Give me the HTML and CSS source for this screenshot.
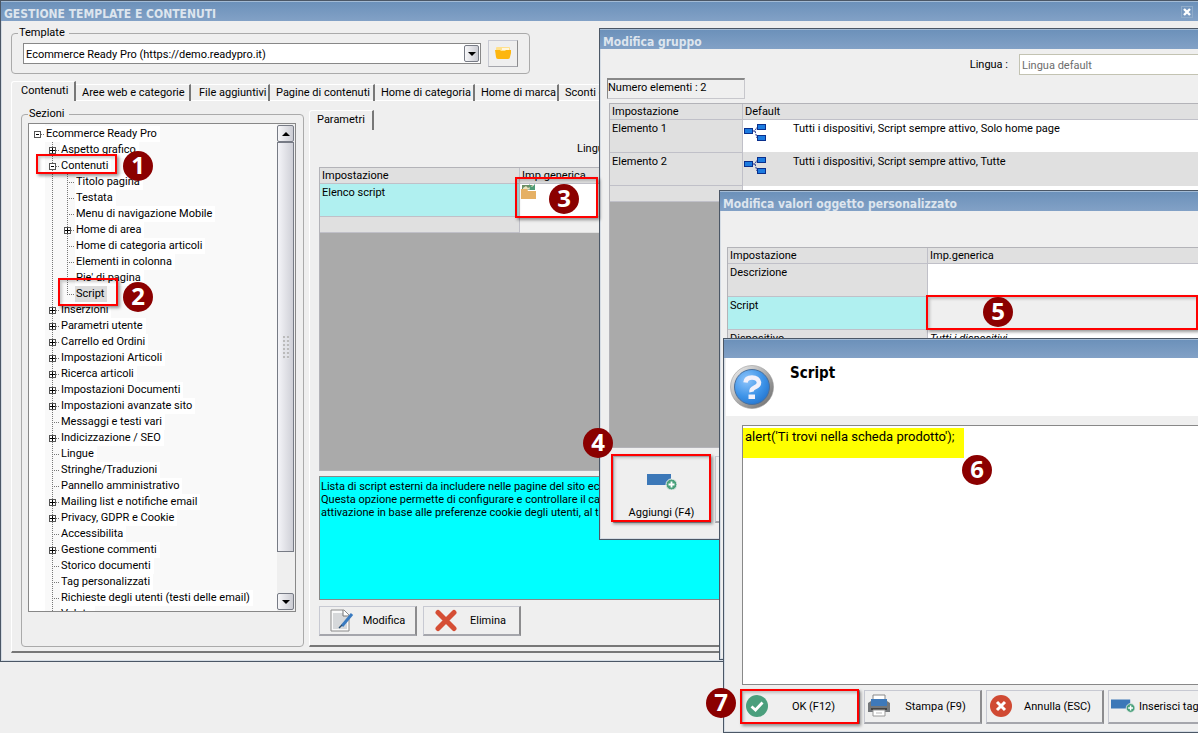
FILE: index.html
```html
<!DOCTYPE html>
<html lang="it">
<head>
<meta charset="utf-8">
<title>Gestione template e contenuti</title>
<link rel="stylesheet" href="styles.css">
</head>
<body>
<svg class="defs" aria-hidden="true">
  <symbol id="nodes" viewBox="0 0 24 19">
    <path d="M9 8h2l2-4h2M11 8l2 7h2" fill="none" stroke="#1b2f8a" stroke-dasharray="2 1"/>
    <g fill="#1c7be0" stroke="#0a2f8c"><rect x=".5" y="5.500" width="8" height="5"/><rect x="13.500" y="1.500" width="8" height="5"/><rect x="13.500" y="12.500" width="8" height="5"/></g>
  </symbol>
  <symbol id="add" viewBox="0 0 30 18">
    <path d="M0 1h24v11H0z" fill="#3c78b8"/><circle cx="24.500" cy="11.500" r="5.500" fill="#4aa17c" stroke="#efefef"/><path d="M24.500 8.500v6M21.500 11.500h6" stroke="#fff" stroke-width="1.800"/>
  </symbol>
</svg>
<main class="desktop">
  <section class="window window-main">
    <header class="titlebar"><h1>GESTIONE TEMPLATE E CONTENUTI</h1><button class="close" aria-label="Chiudi"><svg viewBox="0 0 8 8"><path d="M1 1l6 6M7 1L1 7" stroke="#fff" stroke-width="2.400"/></svg></button></header>
    <fieldset class="group template">
      <legend>Template</legend>
      <div class="select-wrap"><select aria-label="Template"><option>Ecommerce Ready Pro (https://demo.readypro.it)</option></select><span class="arrow-box"><i class="arrow down"></i></span></div>
      <button class="raised folder" aria-label="Apri"><svg viewBox="0 0 16 12"><path d="M1 1q0-1 1-1h12q1 0 1 1v5H1z" fill="#ffe08c"/><path d="M0 3h5l1 1h4l1-1h5v3l-1 4q0 2-2 2H3q-2 0-2-2z" fill="#fdb60e"/><path d="M7 1h7v2H7z" fill="#fff6dc"/></svg></button>
    </fieldset>
    <nav class="tabs" role="tablist">
      <button class="tab active" role="tab">Contenuti</button><button class="tab w2" role="tab">Aree web e categorie</button><button class="tab w3" role="tab">File aggiuntivi</button><button class="tab w4" role="tab">Pagine di contenuti</button><button class="tab w5" role="tab">Home di categoria</button><button class="tab w6" role="tab">Home di marca</button><button class="tab w7" role="tab">Sconti e</button>
    </nav>
    <div class="panel">
      <fieldset class="group sections">
        <legend>Sezioni</legend>
        <div class="listbox">
          <ul class="tree">
            <li><div class="row"><button class="toggle" aria-label="Comprimi"></button><span class="label">Ecommerce Ready Pro</span></div>
              <ul>
                <li><div class="row"><button class="toggle plus" aria-label="Espandi"></button><span class="label">Aspetto grafico</span></div></li>
                <li><div class="row"><button class="toggle" aria-label="Comprimi"></button><span class="label">Contenuti</span></div>
                  <ul>
                    <li><div class="row leaf"><span class="label">Titolo pagina</span></div></li>
                    <li><div class="row leaf"><span class="label">Testata</span></div></li>
                    <li><div class="row leaf"><span class="label">Menu di navigazione Mobile</span></div></li>
                    <li><div class="row"><button class="toggle plus" aria-label="Espandi"></button><span class="label">Home di area</span></div></li>
                    <li><div class="row leaf"><span class="label">Home di categoria articoli</span></div></li>
                    <li><div class="row leaf"><span class="label">Elementi in colonna</span></div></li>
                    <li><div class="row leaf"><span class="label">Pie' di pagina</span></div></li>
                    <li><div class="row leaf"><span class="label selected">Script</span></div></li>
                  </ul>
                </li>
                <li><div class="row"><button class="toggle plus" aria-label="Espandi"></button><span class="label">Inserzioni</span></div></li>
                <li><div class="row"><button class="toggle plus" aria-label="Espandi"></button><span class="label">Parametri utente</span></div></li>
                <li><div class="row"><button class="toggle plus" aria-label="Espandi"></button><span class="label">Carrello ed Ordini</span></div></li>
                <li><div class="row"><button class="toggle plus" aria-label="Espandi"></button><span class="label">Impostazioni Articoli</span></div></li>
                <li><div class="row"><button class="toggle plus" aria-label="Espandi"></button><span class="label">Ricerca articoli</span></div></li>
                <li><div class="row"><button class="toggle plus" aria-label="Espandi"></button><span class="label">Impostazioni Documenti</span></div></li>
                <li><div class="row"><button class="toggle plus" aria-label="Espandi"></button><span class="label">Impostazioni avanzate sito</span></div></li>
                <li><div class="row leaf"><span class="label">Messaggi e testi vari</span></div></li>
                <li><div class="row"><button class="toggle plus" aria-label="Espandi"></button><span class="label">Indicizzazione / SEO</span></div></li>
                <li><div class="row leaf"><span class="label">Lingue</span></div></li>
                <li><div class="row leaf"><span class="label">Stringhe/Traduzioni</span></div></li>
                <li><div class="row leaf"><span class="label">Pannello amministrativo</span></div></li>
                <li><div class="row"><button class="toggle plus" aria-label="Espandi"></button><span class="label">Mailing list e notifiche email</span></div></li>
                <li><div class="row"><button class="toggle plus" aria-label="Espandi"></button><span class="label">Privacy, GDPR e Cookie</span></div></li>
                <li><div class="row leaf"><span class="label">Accessibilita</span></div></li>
                <li><div class="row"><button class="toggle plus" aria-label="Espandi"></button><span class="label">Gestione commenti</span></div></li>
                <li><div class="row leaf"><span class="label">Storico documenti</span></div></li>
                <li><div class="row leaf"><span class="label">Tag personalizzati</span></div></li>
                <li><div class="row leaf"><span class="label">Richieste degli utenti (testi delle email)</span></div></li>
                <li><div class="row leaf"><span class="label">Valute</span></div></li>
              </ul>
            </li>
          </ul>
          <div class="scrollbar"><span class="arrow-box"><i class="arrow up"></i></span><div class="thumb"><i class="grip"></i></div><span class="arrow-box"><i class="arrow down"></i></span></div>
        </div>
      </fieldset>
      <div class="params">
        <div class="tabs inner" role="tablist"><button class="tab active" role="tab">Parametri</button></div>
        <div class="params-body">
          <div class="lang">Lingua :</div>
          <div class="gridbox main-grid">
            <table class="grid g200">
              <tr><th>Impostazione</th><th>Imp.generica</th></tr>
              <tr class="tall"><td class="current">Elenco script</td><td class="white icon-cell"><svg class="box-icon" viewBox="0 0 15 15"><path d="M1 5V1h11v5z" fill="#6b8f65"/><path d="M2 4l3-2 2 2 5-3v4H2z" fill="#e8e2c0"/><path d="M8 0l3 3 3-3v6H9z" fill="#4e9b76"/><path d="M0 5h6l1 2h8v8H0z" fill="#e5b064"/></svg></td></tr>
              <tr class="blank"><td></td><td></td></tr>
            </table>
          </div>
          <p class="info">Lista di script esterni da includere nelle pagine del sito ecommerce.<br>Questa opzione permette di configurare e controllare il caricamento<br>attivazione in base alle preferenze cookie degli utenti, al tipo</p>
          <div class="buttons">
            <button class="raised edit"><svg viewBox="0 0 24 24"><path d="M1 1h13l5 5v16H1z" fill="#fafafa" stroke="#8a8a8a"/><path d="M3 4h10v3h4v13H3z" fill="#d6d8da"/><path d="M13 1v6h6" fill="#fff" stroke="#777"/><path d="M22 5L12 17" stroke="#397ac0" stroke-width="3"/><path d="M12 16l-3 3" stroke="#284d70" stroke-width="1.500"/></svg><span>Modifica</span></button>
            <button class="raised edit"><svg viewBox="0 0 24 24"><path d="M4 3.500l16 16M20 3.500L4 19.500" stroke="#d54e35" stroke-width="5" stroke-linecap="round"/></svg><span>Elimina</span></button>
          </div>
        </div>
      </div>
    </div>
  </section>

  <section class="window window-group">
    <header class="titlebar"><h2>Modifica gruppo</h2></header>
    <div class="group-top"><label for="lang">Lingua :</label><input id="lang" value="Lingua default"></div>
    <div class="count">Numero elementi : 2</div>
    <div class="gridbox group-grid">
      <table class="grid g133">
        <tr><th>Impostazione</th><th>Default</th></tr>
        <tr class="tall"><td>Elemento 1</td><td class="white icon-cell"><div class="cell"><svg><use href="#nodes"/></svg>Tutti i dispositivi, Script sempre attivo, Solo home page</div></td></tr>
        <tr class="tall"><td>Elemento 2</td><td class="icon-cell"><div class="cell"><svg><use href="#nodes"/></svg>Tutti i dispositivi, Script sempre attivo, Tutte</div></td></tr>
        <tr class="blank"><td></td><td class="white"></td></tr>
      </table>
    </div>
    <div class="group-buttons">
      <button class="raised big"><svg><use href="#add"/></svg><span>Aggiungi (F4)</span></button>
      <button class="raised big" aria-label="Modifica"></button>
    </div>
  </section>

  <section class="window window-values">
    <header class="titlebar"><h2>Modifica valori oggetto personalizzato</h2></header>
    <div class="gridbox values-grid">
      <table class="grid g200">
        <tr><th>Impostazione</th><th>Imp.generica</th></tr>
        <tr class="tall"><td>Descrizione</td><td class="white"></td></tr>
        <tr class="tall"><td class="current">Script</td><td class="plain"></td></tr>
        <tr class="tall"><td>Dispositivo</td><td class="white"><em>Tutti i dispositivi</em></td></tr>
      </table>
    </div>
  </section>

  <section class="window window-script">
    <header class="titlebar"></header>
    <div class="banner">
      <svg viewBox="0 0 44 44"><defs><linearGradient id="rim" x1="0" y1="0" x2="1" y2="1"><stop offset="0" stop-color="#f4f4f4"/><stop offset="1" stop-color="#666"/></linearGradient><radialGradient id="ball" cx=".35" cy=".3" r=".8"><stop offset="0" stop-color="#8fc5fb"/><stop offset=".6" stop-color="#3d93e8"/><stop offset="1" stop-color="#2272cc"/></radialGradient></defs><circle cx="22" cy="22" r="21.500" fill="url(#rim)" stroke="#999" stroke-width=".6"/><circle cx="22" cy="22" r="17.500" fill="url(#ball)" stroke="#4b6f9a"/><path d="M15.500 17.500q.5-5 6.500-5t7 5q0 3-4 4.800t-3.500 4.700" fill="none" stroke="#f3f1fb" stroke-width="4.500"/><path d="M18.500 29.500h6.500v4.500h-6.500z" fill="#f3f1fb"/></svg>
      <h2>Script</h2>
    </div>
    <textarea aria-label="Script" spellcheck="false">alert('Ti trovi nella scheda prodotto');</textarea>
    <div class="script-buttons">
      <button class="raised"><svg viewBox="0 0 24 24"><circle cx="12" cy="12" r="11" fill="#4b9f7d"/><path d="M6.500 12.500l4 3.500 7-7.500" fill="none" stroke="#fff" stroke-width="2.800"/></svg><span>OK (F12)</span></button>
      <button class="raised"><svg viewBox="0 0 24 24"><path d="M6 1h12v6H6z" fill="#fff" stroke="#888"/><path d="M1 9l3-2h16l3 2v9H1z" fill="#74777a"/><path d="M4 5h16v7H4z" fill="#3e79ba"/><path d="M4 14h16v2H4z" fill="#444"/><path d="M6 16h12v6H6z" fill="#fff" stroke="#999"/><path d="M9 19h6" stroke="#bbb"/></svg><span>Stampa (F9)</span></button>
      <button class="raised"><svg viewBox="0 0 24 24"><circle cx="12" cy="12" r="11" fill="#d04a33"/><path d="M8 8l8 8M16 8l-8 8" stroke="#fff" stroke-width="3"/></svg><span>Annulla (ESC)</span></button>
      <button class="raised insert"><svg viewBox="0 0 30 18"><use href="#add"/></svg><span>Inserisci tag</span></button>
    </div>
  </section>

  <div class="mark m1"></div><div class="mark m2"></div><div class="mark m3"></div><div class="mark m4"></div><div class="mark m5"></div><div class="mark m7"></div>
  <b class="badge b1">1</b><b class="badge b2">2</b><b class="badge b3">3</b><b class="badge b4">4</b><b class="badge b5">5</b><b class="badge b6">6</b><b class="badge b7">7</b>
</main>
</body>
</html>
```
FILE: styles.css
```css
* { box-sizing: border-box; }
body { margin: 0; background: #efefef; color: #000; font: 11px/16px Roboto, "Noto Sans", sans-serif; }
button, select, input, textarea { font: inherit; color: inherit; margin: 0; padding: 0; border: 0; border-radius: 0; background: none; }
h1, h2, p, ul { margin: 0; padding: 0; }
ul { list-style: none; }
svg { display: block; flex: none; }
.defs { position: absolute; width: 0; height: 0; }
.desktop { position: relative; min-height: 100vh; overflow: hidden; }

.window { position: absolute; right: 0; display: flex; flex-direction: column; background: #efefef; border: 1px solid #4b5766; border-right: 0; box-shadow: inset 1px -1px #d5dce4; }
.window-main { left: 0; top: 0; padding-bottom: 8px; }
.window-group { left: 599px; top: 28px; padding-bottom: 16px; }
.window-values { left: 719px; top: 190px; }
.window-script { left: 723px; top: 338px; padding-bottom: 8px; }

.titlebar { display: flex; align-items: center; justify-content: space-between; height: 20px; padding: 5px 5px 0 3px; background: linear-gradient(#6c91ba, #82a1c6); border-top: 1px solid #a3bbd5; color: #dde5ee; }
.titlebar h1, .titlebar h2, .banner h2 { font-family: "DejaVu Sans Condensed", "Noto Sans", sans-serif; font-weight: bold; white-space: nowrap; }
.titlebar h1, .titlebar h2 { font-size: 12px; line-height: 14px; }
.close { display: grid; place-items: center; width: 12px; height: 12px; margin-bottom: 5px; border: 1px solid #8fabc9; }
.close svg { width: 8px; height: 8px; }

.group { min-width: 0; margin: 0; border: 1px solid #aaa; border-radius: 4px; }
.group legend { padding: 0 4px 0 1px; line-height: 14px; }
.template { display: flex; align-items: center; gap: 7px; width: 519px; height: 48px; margin: 5px 0 0 10px; padding: 0 11px 4px; }
.template legend { margin-left: -5px; }
.select-wrap { position: relative; flex: 1; height: 21px; border: 1px solid #888; background: #fff; }
.select-wrap select { width: 100%; height: 19px; padding: 2px 0 0 2px; appearance: none; outline: 0; }
.select-wrap .arrow-box { position: absolute; right: 1px; top: 1px; width: 15px; height: 17px; pointer-events: none; }
.arrow-box { display: flex; align-items: center; justify-content: center; height: 17px; border: 1px solid #777b85; border-radius: 2px; background: linear-gradient(90deg, #f7f7f9, #cbccd3); }
.arrow { border: 4px solid transparent; }
.arrow.down { border-top-color: #000; border-bottom: 0; }
.arrow.up { border-bottom-color: #000; border-top: 0; }

.raised { display: flex; align-items: center; border: 1px solid #c7c9d2; border-right: 2px solid #8c8c8e; border-bottom: 2px solid #a5a6ac; background: #efefef; white-space: nowrap; }
.folder { width: 30px; height: 27px; padding: 0 0 2px 6px; border-width: 1px; }
.folder svg { width: 16px; height: 12px; }

.tabs { display: flex; align-items: flex-end; overflow: hidden; height: 20px; margin: 7px 0 0 10px; }
.tab { flex: none; height: 17px; padding: 0 0 0 6px; border-top: 1px solid #fff; border-right: 2px solid #777; text-align: left; white-space: nowrap; box-shadow: inset 0 -1px #fff; }
.tab.active { width: 65px; height: 20px; padding: 0 0 1px 9px; border-left: 1px solid #fff; border-radius: 3px 0 0 0; box-shadow: none; }
.w2 { width: 115px; } .w3 { width: 79px; padding-left: 8px; } .w4 { width: 105px; } .w5 { width: 100px; } .w6 { width: 84px; } .w7 { flex: 1; }

.panel { display: flex; gap: 5px; margin-left: 10px; padding: 6px 0 4px 9px; border-left: 1px solid #fff; border-bottom: 2px solid #777; }
.sections { width: 283px; padding: 2px 7px 31px 6px; }
.listbox { display: flex; height: 489px; border: 1px solid #888; background: #fff; }
.tree { flex: 1; overflow: hidden; padding-top: 2px; background: linear-gradient(#f9f9f9, #f9f9f9) 16px 0 no-repeat; }
.tree ul { padding-left: 15px; }
.tree li li { background: repeating-linear-gradient(#777 0 1px, transparent 1px 2px) 8px 0 / 1px 100% no-repeat; }
.tree ul ul li:last-child { background-size: 1px 8px; }
.row { display: flex; align-items: center; height: 16px; padding-left: 5px; }
.row.leaf { padding-left: 8px; }
.toggle { width: 7px; height: 7px; border: 1px solid #555; background: linear-gradient(#000, #000) 1px 2px / 3px 1px no-repeat, #fff; }
.toggle.plus { background: linear-gradient(#000, #000) 0 2px / 5px 1px no-repeat, linear-gradient(#000, #000) 2px 0 / 1px 5px no-repeat, #fff; }
.label { display: flex; order: 2; white-space: nowrap; background: #fff; padding: 0 3px 0 1px; }
.label.selected { background: #dcdcdc; }
.row::before { content: ""; order: 1; width: 4px; height: 1px; background: repeating-linear-gradient(90deg, #777 0 1px, transparent 1px 2px); }
.row.leaf::before { width: 8px; }
.scrollbar { display: flex; flex-direction: column; width: 18px; padding: 1px 1px 1px 0; background: #efefef; }
.thumb { display: grid; place-items: center; flex: none; height: 410px; border: 1px solid #777b85; background: linear-gradient(90deg, #f4f4f8, #cfd0d7); }
.scrollbar .arrow-box:last-child { margin-top: auto; }
.grip { width: 6px; height: 23px; background: repeating-linear-gradient(transparent 0 2px, #e2e3e8 2px 4px), repeating-linear-gradient(90deg, #bbb 0 2px, transparent 2px 4px); }

.params { flex: 1; min-width: 0; padding-top: 3px; }
.params .inner { margin: 0; }
.inner .tab.active { padding-left: 7px; }
.params-body { border: solid #fff; border-width: 0 0 0 1px; border-bottom: 2px solid #777; padding: 11px 0 9px 9px; }
.lang { padding-left: 258px; height: 26px; white-space: nowrap; }
.gridbox { background: #aaa; border: 1px solid #b3b3b8; border-right: 0; overflow: hidden; }
.main-grid { height: 304px; }
.grid { width: 100%; table-layout: fixed; border-collapse: separate; border-spacing: 0; }
.grid th, .grid td { height: 16px; padding: 0 2px; text-align: left; vertical-align: top; font-weight: normal; background: #e0e0e0; border: 1px solid #c0c0c8; border-width: 0 1px 1px 0; white-space: nowrap; line-height: 15px; }
.grid .tall td { height: 33px; line-height: 17px; }
.grid th:last-child, .grid td:last-child { border-right: 0; }
.grid td:last-child { border-bottom-color: #e0e0e0; }
.g200 th:first-child { width: 200px; }
.g133 th:first-child { width: 133px; }
.grid .current { background: #b0f0f0; }
.grid .white { background: #fff; }
.grid .plain, .main-grid .blank td:last-child { background: #efefef; }
.grid .icon-cell { padding-left: 1px; }
.box-icon { width: 15px; height: 15px; }
.cell { display: flex; gap: 25px; }
.cell svg { width: 24px; height: 19px; margin-top: 3px; }
.info { height: 124px; margin: 5px 0 6px; padding: 3px 1px; border: 1px solid #888; background: #0ff; line-height: 13px; white-space: nowrap; overflow: hidden; }
.buttons { display: flex; gap: 6px; }
.edit { width: 98px; height: 30px; padding: 0 1px 0 10px; }
.edit svg { width: 24px; height: 24px; }
.edit span { flex: 1; text-align: center; }

.group-top { display: flex; justify-content: flex-end; align-items: center; gap: 11px; height: 21px; margin: 5px 0 3px; }
.group-top input { width: 179px; height: 21px; padding: 1px 0 0 2px; border: 1px solid #c3c3b2; border-right: 0; background: #fff; color: #6c6c6c; }
.count { width: 138px; height: 21px; margin-left: 7px; border: 1px solid #c7c7cc; border-top: 2px solid #888; border-left: 1px solid #888; }
.group-grid { height: 345px; margin: 4px 0 8px 9px; }
.group-buttons { display: flex; gap: 4px; padding-left: 13px; }
.big { flex-direction: column; justify-content: space-between; width: 98px; height: 67px; padding: 16px 0 0; }
.big svg { width: 30px; height: 18px; }
.values-grid { height: 412px; margin: 36px 0 0 7px; }

.window-script .titlebar { height: 19px; }
.banner { display: flex; gap: 16px; margin-left: 2px; height: 58px; padding: 7px 4px; background: #fff; }
.banner svg { width: 44px; height: 44px; }
.banner h2 { font-size: 15px; line-height: 16px; }
.window-script textarea { height: 260px; margin: 9px 0 5px 18px; padding: 3px 2px; border: 1px solid #888; border-right: 0; outline: 0; resize: none; font-size: 13px; line-height: 16px; background: linear-gradient(#ff0, #ff0) 0 2px / 221px 30px no-repeat, #fff; }
.script-buttons { display: flex; gap: 4px; padding-left: 18px; overflow: hidden; }
.script-buttons .raised { flex: none; width: 118px; height: 34px; padding: 0 0 2px 2px; }
.script-buttons svg { width: 24px; height: 24px; }
.script-buttons span { flex: 1; padding-top: 2px; text-align: center; }
.script-buttons .insert { gap: 4px; }
.script-buttons .insert span { text-align: left; }

.mark { position: absolute; border: 2px solid #f00; box-shadow: 2px 2px 3px #0006, inset 2px 2px 3px #0003; pointer-events: none; }
.m1 { left: 36px; top: 154px; width: 81px; height: 20px; }
.m2 { left: 58px; top: 278px; width: 60px; height: 28px; }
.m3 { left: 515px; top: 177px; width: 83px; height: 41px; }
.m4 { left: 611px; top: 454px; width: 100px; height: 68px; }
.m5 { left: 926px; top: 295px; right: 0; height: 35px; }
.m7 { left: 740px; top: 689px; width: 119px; height: 35px; }
.badge { position: absolute; width: 30px; height: 30px; border-radius: 50%; background: #8b0000; color: #fff; font: bold 24px/28px "Open Sans", sans-serif; text-align: center; }
.b1 { left: 123px; top: 151px; } .b2 { left: 123px; top: 282px; } .b3 { left: 549px; top: 184px; } .b4 { left: 583px; top: 428px; } .b5 { left: 983px; top: 297px; } .b6 { left: 962px; top: 455px; } .b7 { left: 706px; top: 688px; }
```
